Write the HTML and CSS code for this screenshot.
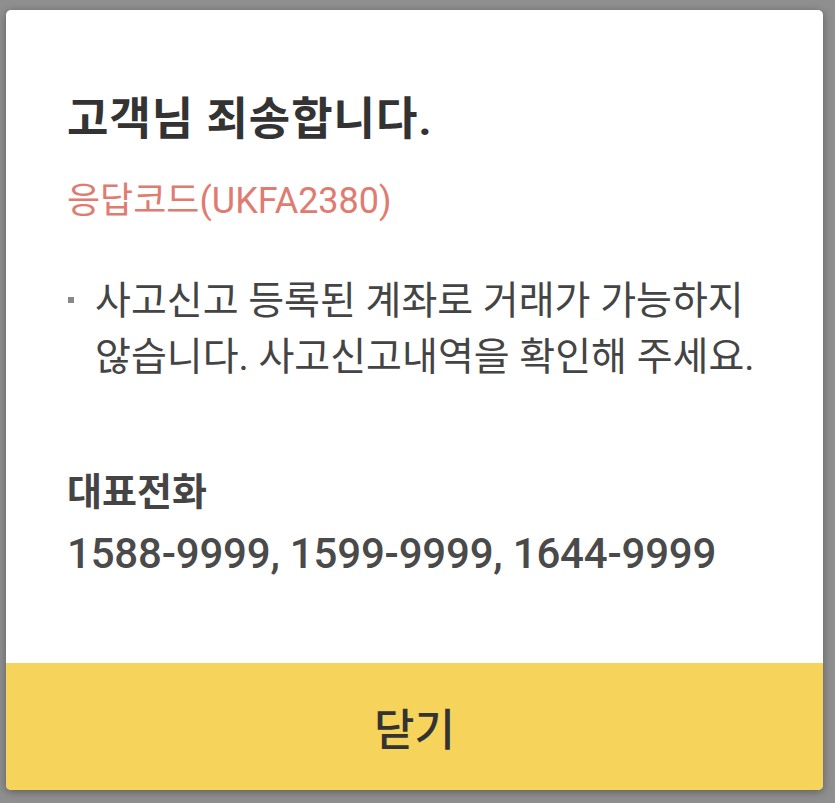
FILE: index.html
```html
<!DOCTYPE html>
<html lang="ko">
<head>
    <meta charset="UTF-8">
    <meta name="viewport" content="width=device-width, initial-scale=1.0">
    <title>안내</title>
    <link rel="stylesheet" href="styles.css">
</head>
<body>

<div class="overlay">
    <div class="dialog">
        <div class="dialog-body">
            <h1 class="title">고객님 죄송합니다.</h1>
            <p class="code">응답코드(UKFA2380)</p>

            <ul class="notice">
                <li>사고신고 등록된 계좌로 거래가 가능하지 않습니다. 사고신고내역을 확인해 주세요.</li>
            </ul>

            <h2 class="phone-label">대표전화</h2>
            <p class="phone">1588-9999, 1599-9999, 1644-9999</p>
        </div>
        <button class="close-btn" type="button">닫기</button>
    </div>
</div>

</body>
</html>
```

FILE: styles.css
```css
body {
    margin: 0;
    padding: 0;
    background-color: #8f8f8f;
    font-family: Roboto, "Noto Sans CJK KR", sans-serif;
}

.overlay {
    height: 803px;
    padding: 10px 12px 13px 6px;
    box-sizing: border-box;
}

.dialog {
    display: flex;
    flex-direction: column;
    height: 100%;
    background-color: #fff;
    border-radius: 5px;
    overflow: hidden;
    box-shadow: 0 2px 8px rgba(0, 0, 0, 0.35);
}

.dialog-body {
    flex: 1;
    padding: 82px 56px 0 61px;
}

.title {
    margin: 0;
    font-size: 45px;
    font-weight: bold;
    letter-spacing: 1px;
    color: #333;
    line-height: 56px;
}

.code {
    margin: 31px 0 0 0;
    font-size: 36px;
    color: #e07b70;
    line-height: 44px;
}

.notice {
    list-style: none;
    margin: 50px 0 0 0;
    padding: 0 0 0 28px;
}

.notice li {
    position: relative;
    font-size: 39px;
    line-height: 56px;
    color: #444;
}

.notice li::before {
    content: "";
    position: absolute;
    left: -27px;
    top: 24px;
    width: 6px;
    height: 6px;
    background-color: #888;
}

.phone-label {
    margin: 85px 0 0 0;
    font-size: 38px;
    font-weight: bold;
    color: #444;
    line-height: 44px;
}

.phone {
    margin: 18px 0 0 0;
    font-size: 42px;
    font-weight: 500;
    letter-spacing: -0.2px;
    color: #4a4a4a;
    line-height: 44px;
}

.close-btn {
    height: 127px;
    border: none;
    background-color: #f6d35b;
    font-family: Roboto, "Noto Sans CJK KR", sans-serif;
    font-size: 44px;
    font-weight: 500;
    color: #333;
    cursor: pointer;
}
```
